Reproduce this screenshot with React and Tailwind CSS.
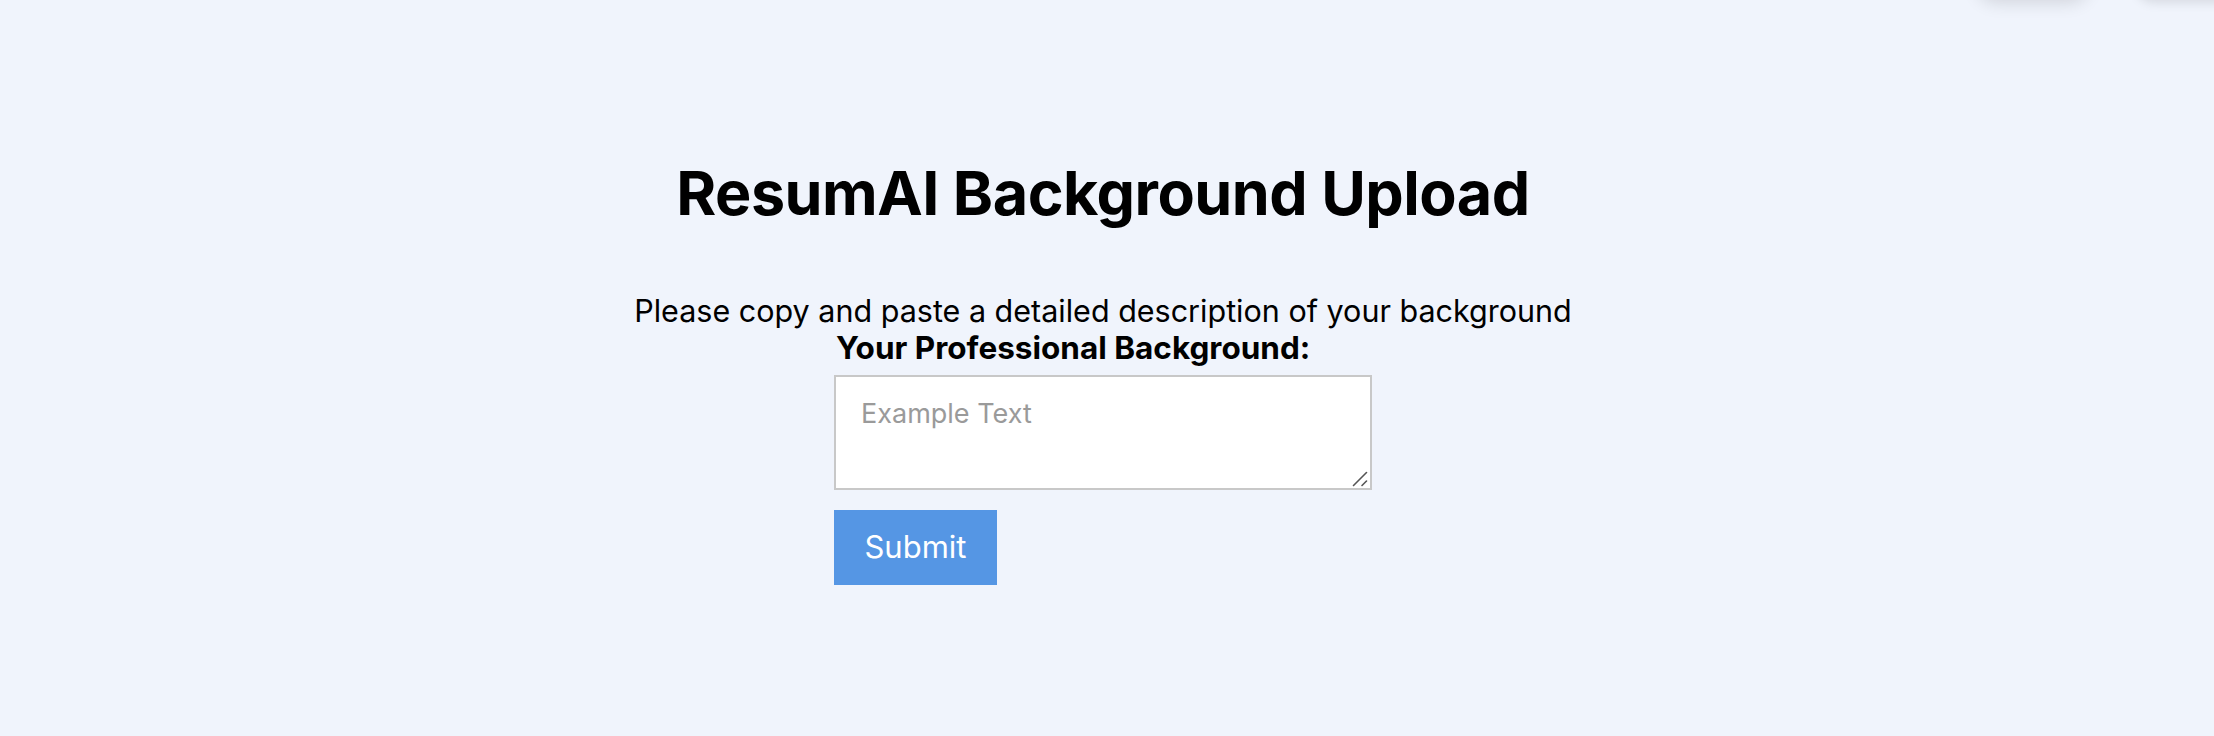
import React, { useState } from 'react';

const App = () => {
  const [background, setBackground] = useState('');

  const handleSubmit = (e) => {
    e.preventDefault();
  };

  return (
    <div className="relative min-h-screen overflow-hidden bg-[#f0f4fc] text-black font-['Inter','Liberation_Sans',sans-serif]">
      {/* shadows of things scrolled out above the page */}
      <div className="absolute -top-[40px] left-[1978px] h-[36px] w-[110px] rounded-[18px] bg-[#f0f4fc] shadow-[0_6px_18px_rgba(0,0,0,0.14)]" />
      <div className="absolute -top-[40px] left-[2136px] h-[38px] w-[130px] rounded-[18px] bg-[#f0f4fc] shadow-[0_4px_12px_rgba(0,0,0,0.12)]" />

      <div className="flex flex-col items-center pr-2 pt-[161px]">
        <h1 className="text-[61px] leading-[64px] font-bold tracking-[-0.5px]">ResumAI Background Upload</h1>

        <p className="mt-[67px] text-[30.5px] leading-[37px]">
          Please copy and paste a detailed description of your background
        </p>

        <form onSubmit={handleSubmit} className="flex flex-col items-start">
          <label htmlFor="background" className="pl-[2px] text-[31.5px] leading-[37px] font-bold">
            Your Professional Background:
          </label>
          <div className="relative mt-[9px]">
            <textarea
              id="background"
              name="background"
              value={background}
              onChange={(e) => setBackground(e.target.value)}
              placeholder="Example Text"
              className="block h-[115px] w-[538px] resize-none border-2 border-[#c8c8c8] bg-white px-[25px] py-[20px] text-[27px] leading-[34px] text-black placeholder:text-[#9a9a9a] focus:outline-none"
            />
            {/* resize grip */}
            <svg
              className="pointer-events-none absolute bottom-[3px] right-[4px] h-[16px] w-[16px]"
              viewBox="0 0 16 16"
              fill="none"
              stroke="#555"
              strokeWidth="1.6"
              strokeLinecap="round"
            >
              <line x1="1.5" y1="14.5" x2="14.5" y2="1.5" />
              <line x1="10" y1="14.5" x2="14.5" y2="10" />
            </svg>
          </div>
          <button
            type="submit"
            className="mt-[20px] h-[75px] w-[163px] bg-[#5596e4] text-[31px] text-white"
          >
            Submit
          </button>
        </form>
      </div>
    </div>
  );
};

export default App;
